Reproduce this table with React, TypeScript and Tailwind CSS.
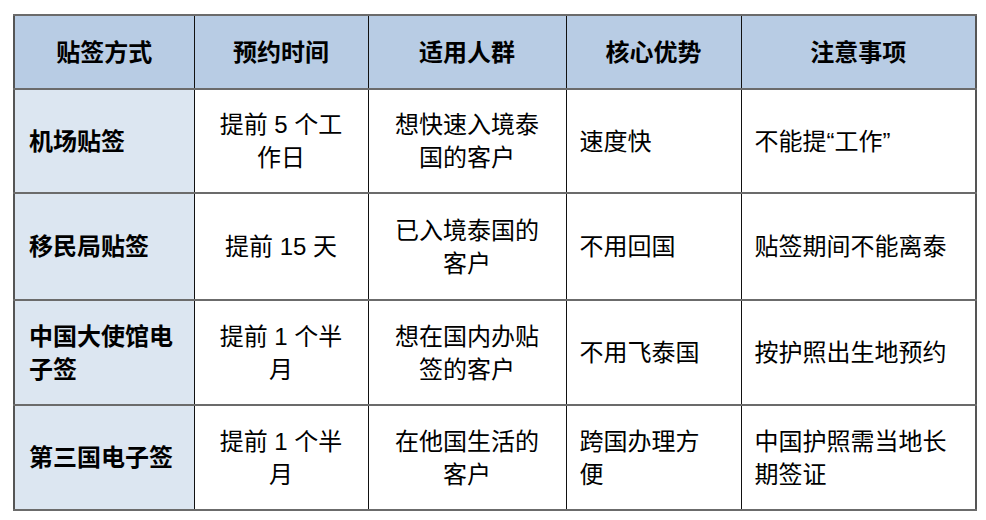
const HEAD = ['贴签方式', '预约时间', '适用人群', '核心优势', '注意事项']

const ROWS = [
  { h: 'h-[104px]', cells: ['机场贴签', '提前 5 个工作日', '想快速入境泰国的客户', '速度快', '不能提“工作”'] },
  { h: 'h-[107px]', cells: ['移民局贴签', '提前 15 天', '已入境泰国的客户', '不用回国', '贴签期间不能离泰'] },
  { h: 'h-[105px]', cells: ['中国大使馆电子签', '提前 1 个半月', '想在国内办贴签的客户', '不用飞泰国', '按护照出生地预约'] },
  { h: 'h-[105px]', cells: ['第三国电子签', '提前 1 个半月', '在他国生活的客户', '跨国办理方便', '中国护照需当地长期签证'] },
]

const line = 'border-x border-x-[#111] border-y-2 border-y-[#6b6b6b]'

export default function App() {
  return (
    <div
      className="w-[986px] h-[520px] bg-white pl-[13px] pt-[14px] text-black"
      style={{ fontFamily: '"Liberation Sans", "Noto Sans CJK SC", sans-serif' }}
    >
      <table className="table-fixed border-collapse w-[962px] border-2 border-[#555] text-[24px] leading-[33px]">
        <colgroup>
          <col className="w-[180px]" />
          <col className="w-[174px]" />
          <col className="w-[198px]" />
          <col className="w-[175px]" />
          <col className="w-[235px]" />
        </colgroup>
        <thead>
          <tr className="h-[74px] bg-[#b8cce4]">
            {HEAD.map((t) => (
              <th key={t} className={`${line} font-bold text-center align-middle`}>
                {t}
              </th>
            ))}
          </tr>
        </thead>
        <tbody>
          {ROWS.map((r) => (
            <tr key={r.cells[0]} className={r.h}>
              <td className={`${line} bg-[#dce6f1] font-bold pl-[14px] pr-[10px] align-middle`}>{r.cells[0]}</td>
              <td className={`${line} text-center px-[15px] align-middle`}>{r.cells[1]}</td>
              <td className={`${line} text-center px-[22px] align-middle`}>{r.cells[2]}</td>
              <td className={`${line} pl-[13px] pr-[22px] align-middle`}>{r.cells[3]}</td>
              <td className={`${line} pl-[13px] pr-[14px] align-middle`}>{r.cells[4]}</td>
            </tr>
          ))}
        </tbody>
      </table>
    </div>
  )
}
